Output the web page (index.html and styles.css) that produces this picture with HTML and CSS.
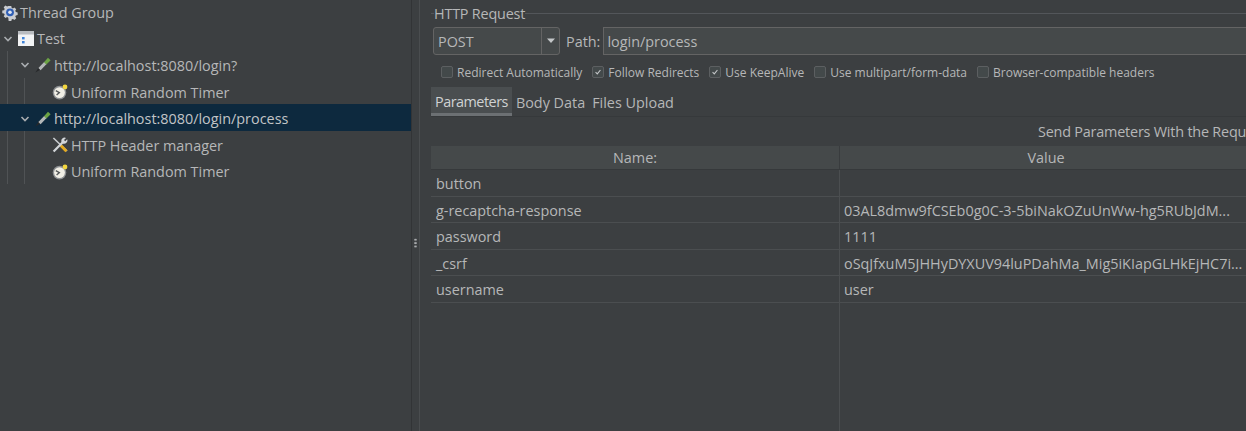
FILE: index.html
```html
<!DOCTYPE html>
<html lang="en">
<head>
  <meta charset="utf-8">
  <title>HTTP Request</title>
  <link rel="stylesheet" href="styles.css">
</head>
<body>
<svg class="defs" width="0" height="0">
  <defs>
    <symbol id="chevron" viewBox="0 0 10 10">
      <path d="M1.5 3 L5 6.5 L8.5 3" fill="none" stroke="#a9adb0" stroke-width="1.6"/>
    </symbol>
    <symbol id="gear" viewBox="0 0 18 18">
      <path d="M7.4 1h3.2l.4 2.2 1.5.7 1.9-1.2 2.2 2.2-1.2 1.9.7 1.5 2.2.4v3.2l-2.2.4-.7 1.5 1.2 1.9-2.2 2.2-1.9-1.2-1.5.7-.4 2.2H7.4L7 15.1l-1.5-.7-1.9 1.2-2.2-2.2 1.2-1.9-.7-1.5L-.3 9.6V6.4l2.2-.4.7-1.5-1.2-1.9 2.2-2.2 1.9 1.2L7 .9z" transform="translate(.6 .8) scale(.93)" fill="#c9ccd0"/>
      <circle cx="9" cy="8.8" r="4.4" fill="#2f5fb5"/>
      <circle cx="9" cy="8.8" r="2" fill="#dfe6f2"/>
    </symbol>
    <symbol id="table" viewBox="0 0 16 15">
      <rect x="0" y="0" width="16" height="15" fill="#f2f3f4"/>
      <rect x="0" y="0" width="16" height="3.5" fill="#b9bcc0"/>
      <rect x="4" y="6" width="2.6" height="2.4" fill="#3f83d8"/>
      <rect x="4" y="10" width="2.6" height="2.4" fill="#3f83d8"/>
    </symbol>
    <symbol id="pencil" viewBox="0 0 16 16">
      <path d="M.4 15.6 L4.2 9.8 L6.4 12 Z" fill="#26282a"/>
      <path d="M3.4 11 L9.4 4.8 L11.6 7 L5.6 13.2 Z" fill="#b4b7b8"/>
      <path d="M9 5.2 L13 .8 L15.6 3.2 L11.4 7.6 Z" fill="#6ca345"/>
    </symbol>
    <symbol id="timer" viewBox="0 0 16 16">
      <circle cx="7.5" cy="8.6" r="6.8" fill="#8c8f92"/>
      <circle cx="7.5" cy="8.6" r="5.4" fill="#f1efe6"/>
      <path d="M3.8 6.6 L7.4 8.6 L4.6 11" fill="none" stroke="#55585a" stroke-width="1.3"/>
      <circle cx="13" cy="3" r="2.4" fill="#f2d63f"/>
    </symbol>
    <symbol id="tools" viewBox="0 0 16 16">
      <path d="M1.4 1 L15 14" stroke="#c8cbce" stroke-width="1.6"/>
      <path d="M8.6 8.2 L14.4 14.2" stroke="#e5ab1f" stroke-width="2.8"/>
      <path d="M1.6 14.6 L11 5" stroke="#d2d5d8" stroke-width="2.2"/>
      <path d="M9.6 5.2 A3.3 3.3 0 0 1 14 .9 L12 3 L13.2 4.2 L15.2 2.2 A3.3 3.3 0 0 1 10.8 6.4 Z" fill="#d2d5d8"/>
    </symbol>
    <symbol id="tick" viewBox="0 0 14 14">
      <path d="M3.6 7.2 L6 9.6 L10.4 4.2" fill="none" stroke="#c4c7c9" stroke-width="1.5"/>
    </symbol>
    <symbol id="caret" viewBox="0 0 10 6">
      <path d="M1 .5 H9 L5 5 Z" fill="#c4c7c9"/>
    </symbol>
  </defs>
</svg>

<div class="app">
  <aside class="tree">
    <div class="row top">
      <svg class="icon gear"><use href="#gear"/></svg>
      <span>Thread Group</span>
    </div>
    <div class="row root">
      <svg class="chev"><use href="#chevron"/></svg>
      <svg class="icon table"><use href="#table"/></svg>
      <span>Test</span>
    </div>
    <div class="row">
      <i class="guide"></i>
      <svg class="chev"><use href="#chevron"/></svg>
      <svg class="icon"><use href="#pencil"/></svg>
      <span>http://localhost:8080/login?</span>
    </div>
    <div class="row">
      <i class="guide"></i><i class="guide"></i>
      <svg class="icon leaf"><use href="#timer"/></svg>
      <span>Uniform Random Timer</span>
    </div>
    <div class="row selected">
      <i class="guide"></i>
      <svg class="chev"><use href="#chevron"/></svg>
      <svg class="icon"><use href="#pencil"/></svg>
      <span>http://localhost:8080/login/process</span>
    </div>
    <div class="row">
      <i class="guide"></i><i class="guide"></i>
      <svg class="icon leaf"><use href="#tools"/></svg>
      <span>HTTP Header manager</span>
    </div>
    <div class="row">
      <i class="guide"></i><i class="guide"></i>
      <svg class="icon leaf"><use href="#timer"/></svg>
      <span>Uniform Random Timer</span>
    </div>
  </aside>

  <div class="splitter"><span class="grip"></span></div>

  <main class="panel">
    <div class="legend"><span>HTTP Request</span></div>

    <div class="request">
      <div class="combo">
        <span class="combo-value">POST</span>
        <span class="combo-arrow"><svg width="10" height="6"><use href="#caret"/></svg></span>
      </div>
      <label class="path-label">Path:</label>
      <div class="field">login/process</div>
    </div>

    <div class="options">
      <span class="opt"><i class="box"></i>Redirect Automatically</span>
      <span class="opt"><i class="box"><svg width="12" height="12"><use href="#tick"/></svg></i>Follow Redirects</span>
      <span class="opt"><i class="box"><svg width="12" height="12"><use href="#tick"/></svg></i>Use KeepAlive</span>
      <span class="opt"><i class="box"></i>Use multipart/form-data</span>
      <span class="opt"><i class="box"></i>Browser-compatible headers</span>
    </div>

    <div class="tabs">
      <span class="tab active">Parameters</span>
      <span class="tab">Body Data</span>
      <span class="tab">Files Upload</span>
    </div>

    <div class="caption">Send Parameters With the Request:</div>

    <div class="table-head">
      <div class="cell name">Name:</div>
      <div class="cell value">Value</div>
    </div>
    <div class="table-body">
      <div class="tr"><div class="cell name">button</div><div class="cell value"></div></div>
      <div class="tr"><div class="cell name">g-recaptcha-response</div><div class="cell value">03AL8dmw9fCSEb0g0C-3-5biNakOZuUnWw-hg5RUbJdM...</div></div>
      <div class="tr"><div class="cell name">password</div><div class="cell value">1111</div></div>
      <div class="tr"><div class="cell name">_csrf</div><div class="cell value">oSqJfxuM5JHHyDYXUV94luPDahMa_Mig5iKIapGLHkEjHC7i...</div></div>
      <div class="tr"><div class="cell name">username</div><div class="cell value">user</div></div>
      <div class="tr filler"><div class="cell name"></div><div class="cell value"></div></div>
    </div>
  </main>
</div>
</body>
</html>
```

FILE: styles.css
```css
html {
  box-sizing: border-box;
}

*, *:before, *:after {
  box-sizing: inherit;
}

html, body {
  height: 100%;
  margin: 0;
}

body {
  background: #3c3f41;
  color: #b6b7b8;
  font-family: "Open Sans", "Noto Sans", sans-serif;
  font-size: 14.4px;
  overflow: hidden;
}

.defs {
  display: block;
  height: 0;
}

.app {
  display: flex;
  height: 431px;
}

/* left tree */
.tree {
  flex: 0 0 411px;
  margin-top: -2px;
}

.row {
  align-items: center;
  display: flex;
  height: 26.6px;
  padding-left: 7px;
  white-space: nowrap;
}

.row > span,
.row > svg {
  margin-top: 2px;
}

.row.top {
  padding-left: 2px;
}

.row.root {
  padding-left: 3px;
}

.row.selected {
  background: #0d293e;
  color: #c2c4c6;
}

.row.selected .guide {
  border-left-color: transparent;
}

.guide {
  align-self: stretch;
  border-left: 1px solid #505355;
  flex: 0 0 17px;
}

.row > .guide + .chev {
  margin-left: -4px;
}

.chev {
  flex: none;
  height: 10px;
  margin-right: 5px;
  width: 10px;
}

.icon {
  flex: none;
  height: 16px;
  margin-right: 3px;
  width: 16px;
}

.icon.gear {
  height: 17px;
  margin-right: 2px;
}

.icon.table {
  height: 15px;
}

.icon.leaf {
  margin-left: 11px;
}

/* pane divider */
.splitter {
  align-items: center;
  border-left: 1px solid #323436;
  border-right: 1px solid #4a4d4f;
  display: flex;
  flex: 0 0 9px;
  justify-content: center;
}

.grip {
  background: radial-gradient(circle, #a9abad 1px, transparent 1.3px) 0 0 / 3px 3.4px;
  height: 10px;
  margin-top: 54px;
  width: 3px;
}

/* right side */
.panel {
  flex: 1;
  min-width: 0;
  overflow: hidden;
  padding-left: 11px;
}

.legend {
  align-items: center;
  display: flex;
  height: 27px;
  letter-spacing: -0.2px;
}

.legend::before,
.legend::after {
  border-top: 1px solid #53565a;
  content: "";
}

.legend::before {
  flex: 0 0 3px;
}

.legend::after {
  flex: 1;
}

.request {
  align-items: center;
  display: flex;
  height: 28px;
  padding-left: 2px;
}

.combo {
  align-items: stretch;
  background: #45494a;
  border: 1px solid #646464;
  border-radius: 3px;
  display: flex;
  flex: 0 0 127px;
  height: 28px;
}

.combo-value {
  flex: 1;
  line-height: 27px;
  padding-left: 4px;
}

.combo-arrow {
  align-items: center;
  border-left: 1px solid #646464;
  display: flex;
  justify-content: center;
  width: 18px;
}

.path-label {
  margin-left: 6px;
  margin-right: 3px;
}

.field {
  background: #45494a;
  border: 1px solid #646464;
  border-right: 0;
  flex: 1;
  height: 28px;
  line-height: 27px;
  padding-left: 3px;
}

.options {
  align-items: center;
  display: flex;
  font-size: 12px;
  height: 32px;
  padding-left: 10px;
  padding-top: 2px;
  white-space: nowrap;
}

.opt {
  align-items: center;
  display: flex;
  margin-right: 10px;
}

.box {
  align-items: center;
  background: #43494a;
  border: 1px solid #5c5f61;
  border-radius: 2px;
  display: flex;
  height: 12px;
  justify-content: center;
  margin-right: 4px;
  width: 12px;
}

.tabs {
  border-bottom: 1px solid #36393b;
  display: flex;
  height: 30px;
}

.tab {
  line-height: 31px;
  padding: 0 4px;
}

.tab + .tab {
  padding-left: 3px;
}

.tab.active {
  background: #4a4e50;
  border-bottom: 3px solid #6c7073;
  color: #d0d2d3;
  letter-spacing: -0.5px;
  line-height: 30px;
  margin-right: 1px;
}

.caption {
  height: 29px;
  letter-spacing: -0.2px;
  line-height: 30px;
  padding-left: 607px;
  white-space: nowrap;
}

.table-head {
  background: #45494a;
  border-bottom: 1px solid #36393b;
  display: flex;
  height: 24px;
  line-height: 23px;
  text-align: center;
}

.table-head .name {
  border-right: 1px solid #393c3e;
}

.table-body {
  height: 262px;
}

.tr {
  border-bottom: 1px solid #4b4e50;
  display: flex;
  height: 26.6px;
  line-height: 28px;
}

.tr.filler {
  border-bottom: 0;
  height: 130px;
}

.cell.name {
  flex: 0 0 409px;
  padding-left: 5px;
  white-space: nowrap;
}

.table-head .cell.name {
  padding-left: 0;
}

.cell.value {
  flex: 0 0 408px;
  padding-left: 4px;
  white-space: nowrap;
}

.tr .cell.name {
  border-right: 1px solid #4b4e50;
}
```
